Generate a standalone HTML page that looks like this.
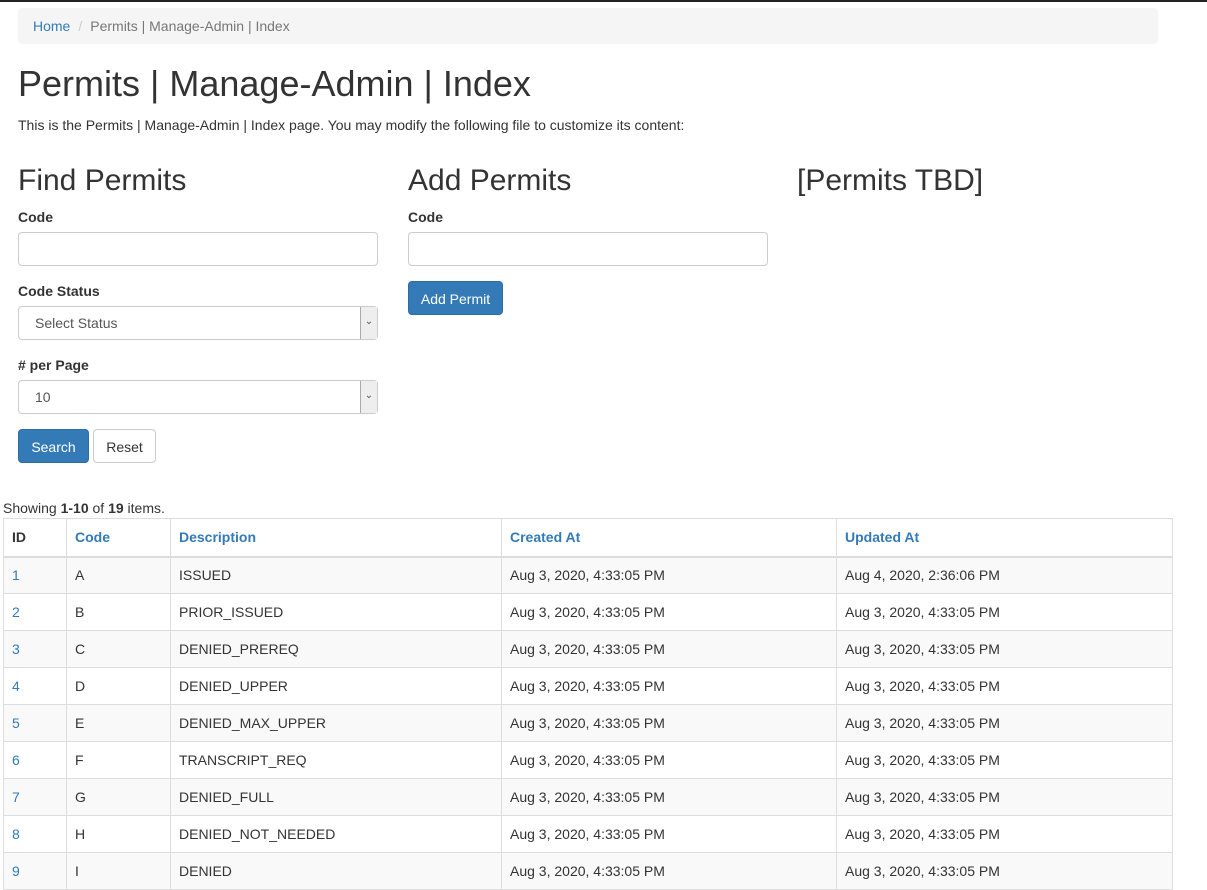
<!DOCTYPE html>
<html><head><style>
*{box-sizing:border-box}
body{margin:0;font-family:"Liberation Sans",sans-serif;font-size:14px;color:#333;background:#fff;width:1207px;height:865px;overflow:hidden;position:relative}
.a{position:absolute}
a{color:#337ab7;text-decoration:none}
.bc{left:18px;top:8px;width:1140px;height:36px;background:#f5f5f5;border-radius:4px;padding:10px 15px 0;font-size:14px;color:#777}
h1{position:absolute;left:18px;top:62px;margin:0;font-size:36px;font-weight:500;line-height:44px}
h2{position:absolute;margin:0;font-size:30px;font-weight:500;line-height:36px}
label{position:absolute;font-weight:bold;font-size:14px}
.in{position:absolute;width:360px;height:34px;border:1px solid #ccc;border-radius:4px;background:#fff;padding:8px 16px 0;color:#555}
.sel .ar{position:absolute;right:0;top:0;width:17px;height:32px;background:#eee;border-left:1px solid #aaa;font-size:10px;text-align:center;line-height:30px;color:#555}
.btn{position:absolute;height:34px;border-radius:4px;padding:8px 0 0;font-size:14px;line-height:18px;white-space:nowrap;text-align:center}
.pr{background:#337ab7;border:1px solid #2e6da4;color:#fff}
.df{background:#fff;border:1px solid #ccc;color:#333}
table{position:absolute;left:3px;top:518px;width:1170px;border-collapse:collapse}
td,th{border:1px solid #ddd;padding:0 8px;height:37px;text-align:left;font-size:14px}
th{border-bottom:2px solid #ddd;height:38px}
th a{font-weight:bold}
tbody tr:nth-child(odd){background:#f9f9f9}
</style></head><body>
<div class="a" style="left:0;top:0;width:1207px;height:2px;background:#222"></div>
<div class="a bc"><a href="#">Home</a><span style="color:#ccc;padding:0 8px">/</span>Permits | Manage-Admin | Index</div>
<h1>Permits | Manage-Admin | Index</h1>
<div class="a" style="left:18px;top:117px;font-size:14px">This is the Permits | Manage-Admin | Index page. You may modify the following file to customize its content:</div>
<h2 style="left:18px;top:163px">Find Permits</h2>
<h2 style="left:408px;top:163px">Add Permits</h2>
<h2 style="left:797px;top:163px">[Permits TBD]</h2>
<label style="left:18px;top:209px">Code</label>
<div class="in" style="left:18px;top:232px"></div>
<label style="left:18px;top:283px">Code Status</label>
<div class="in sel" style="left:18px;top:306px">Select Status<div class="ar">&#8964;</div></div>
<label style="left:18px;top:357px"># per Page</label>
<div class="in sel" style="left:18px;top:380px">10<div class="ar">&#8964;</div></div>
<div class="btn pr" style="left:18px;top:429px;width:71px">Search</div>
<div class="btn df" style="left:93px;top:429px;width:63px">Reset</div>
<label style="left:408px;top:209px">Code</label>
<div class="in" style="left:408px;top:232px"></div>
<div class="btn pr" style="left:408px;top:281px;width:95px">Add Permit</div>
<div class="a" style="left:3px;top:500px">Showing <b>1-10</b> of <b>19</b> items.</div>
<table>
<colgroup><col style="width:63px"><col style="width:104px"><col style="width:331px"><col style="width:335px"><col></colgroup>
<thead><tr><th>ID</th><th><a href="#">Code</a></th><th><a href="#">Description</a></th><th><a href="#">Created At</a></th><th><a href="#">Updated At</a></th></tr></thead>
<tbody>
<tr><td><a href="#">1</a></td><td>A</td><td>ISSUED</td><td>Aug 3, 2020, 4:33:05 PM</td><td>Aug 4, 2020, 2:36:06 PM</td></tr>
<tr><td><a href="#">2</a></td><td>B</td><td>PRIOR_ISSUED</td><td>Aug 3, 2020, 4:33:05 PM</td><td>Aug 3, 2020, 4:33:05 PM</td></tr>
<tr><td><a href="#">3</a></td><td>C</td><td>DENIED_PREREQ</td><td>Aug 3, 2020, 4:33:05 PM</td><td>Aug 3, 2020, 4:33:05 PM</td></tr>
<tr><td><a href="#">4</a></td><td>D</td><td>DENIED_UPPER</td><td>Aug 3, 2020, 4:33:05 PM</td><td>Aug 3, 2020, 4:33:05 PM</td></tr>
<tr><td><a href="#">5</a></td><td>E</td><td>DENIED_MAX_UPPER</td><td>Aug 3, 2020, 4:33:05 PM</td><td>Aug 3, 2020, 4:33:05 PM</td></tr>
<tr><td><a href="#">6</a></td><td>F</td><td>TRANSCRIPT_REQ</td><td>Aug 3, 2020, 4:33:05 PM</td><td>Aug 3, 2020, 4:33:05 PM</td></tr>
<tr><td><a href="#">7</a></td><td>G</td><td>DENIED_FULL</td><td>Aug 3, 2020, 4:33:05 PM</td><td>Aug 3, 2020, 4:33:05 PM</td></tr>
<tr><td><a href="#">8</a></td><td>H</td><td>DENIED_NOT_NEEDED</td><td>Aug 3, 2020, 4:33:05 PM</td><td>Aug 3, 2020, 4:33:05 PM</td></tr>
<tr><td><a href="#">9</a></td><td>I</td><td>DENIED</td><td>Aug 3, 2020, 4:33:05 PM</td><td>Aug 3, 2020, 4:33:05 PM</td></tr>
</tbody></table>
</body></html>
